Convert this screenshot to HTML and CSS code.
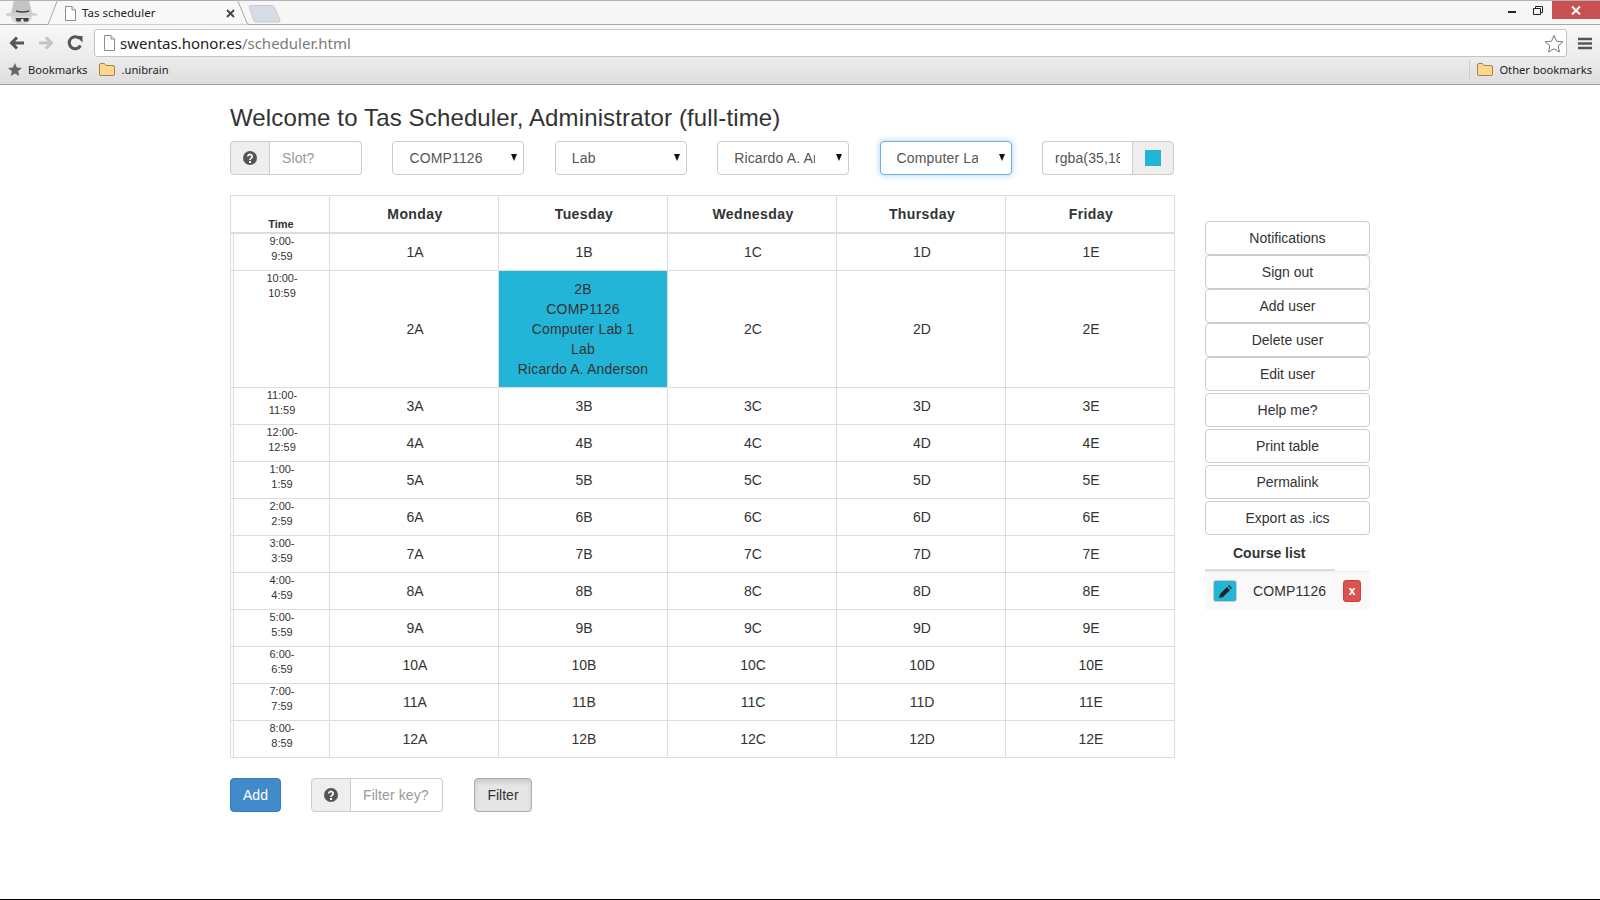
FILE: index.html
```html
<!DOCTYPE html>
<html lang="en">
<head>
    <meta charset="UTF-8">
    <meta name="viewport" content="width=device-width, initial-scale=1.0">
    <title>Tas scheduler</title>
    <link rel="stylesheet" href="styles.css">
</head>
<body>
    <header class="browser">
        <div class="tabstrip">
            <svg class="incognito" width="46" height="24" viewBox="0 0 46 24">
                <path d="M14 0h15l3 12H11z" fill="#c4c4c4"/>
                <ellipse cx="21.500" cy="13.500" rx="16" ry="2.500" fill="#d0d0d0"/>
                <path d="M11 15h21c0 5-4 8-10.500 8S11 20 11 15z" fill="#d8d8d8"/>
                <path d="M16 10q6 2 13 0" fill="none" stroke="#444" stroke-width="1.500"/>
                <path d="M15.500 17h6l-1 3.500h-4zM23 17h6l-1 3.500h-4z" fill="#444"/>
                <path d="M21 17.500h2" stroke="#444"/>
            </svg>
            <div class="tab">
                <svg class="tab-shape" width="204" height="25" viewBox="0 0 204 25">
                    <path d="M0 24.500h2L11 1.500Q11.500 .5 13 .5H190Q191.500 .5 192 1.500L201 23Q201.500 24.500 204 24.500" fill="#f8f8f8" stroke="#a8a8a8"/>
                </svg>
                <svg class="page-icon" width="13" height="15" viewBox="0 0 13 15">
                    <path d="M1.500 .5h6.500l3.500 3.500v10.500h-10z" fill="#fff" stroke="#8c8c8c"/>
                    <path d="M8 .5v3.500h3.500" fill="#eee" stroke="#8c8c8c"/>
                </svg>
                <span class="tab-title">Tas scheduler</span>
                <svg class="tab-close" width="9" height="9" viewBox="0 0 9 9">
                    <path d="M1 1l7 7M8 1 1 8" stroke="#444" stroke-width="1.800"/>
                </svg>
            </div>
            <svg class="new-tab" width="34" height="18" viewBox="0 0 34 18">
                <path d="M1 1.500Q1 .5 2.500 .5H24Q25.500 .5 26 1.500L32 15Q32.500 17 30 17H8Q6 17 5.500 15z" fill="#d7dce4" stroke="#c8ccd2"/>
            </svg>
            <div class="window-buttons">
                <svg width="8" height="3" viewBox="0 0 8 3"><rect width="8" height="2" y="1" fill="#222"/></svg>
                <svg width="10" height="9" viewBox="0 0 10 9">
                    <path d="M2.500 2V.5h7v6H8M.5 2.500h7v6h-7z" fill="none" stroke="#222"/>
                </svg>
                <div class="window-close">
                    <svg width="10" height="9" viewBox="0 0 10 9"><path d="M1 .5l8 8M9 .5l-8 8" stroke="#fff" stroke-width="2"/></svg>
                </div>
            </div>
        </div>
        <div class="toolbar">
            <svg class="nav-icon" width="16" height="14" viewBox="0 0 16 14">
                <path d="M15 7H3M8 1.500 2.500 7 8 12.500" fill="none" stroke="#555" stroke-width="3"/>
            </svg>
            <svg class="nav-icon" width="16" height="14" viewBox="0 0 16 14">
                <path d="M1 7h12M8 1.500 13.500 7 8 12.500" fill="none" stroke="#c4c4c4" stroke-width="3"/>
            </svg>
            <svg class="nav-icon" width="16" height="16" viewBox="0 0 16 16">
                <path d="M13.500 10.500A6 6 0 1 1 12.500 3.500" fill="none" stroke="#555" stroke-width="3"/>
                <path d="M9 .5h6.500V7z" fill="#555" transform="translate(0 .5)"/>
            </svg>
            <div class="address">
                <svg class="page-icon" width="13" height="16" viewBox="0 0 13 16">
                    <path d="M1.500 .5h6.500l3.500 3.500v11.500h-10z" fill="#fff" stroke="#8c8c8c"/>
                    <path d="M8 .5v3.500h3.500" fill="#eee" stroke="#8c8c8c"/>
                </svg>
                <span class="url">swentas.honor.es<span class="url-path">/scheduler.html</span></span>
                <svg class="star" width="20" height="19" viewBox="0 0 20 19">
                    <path d="M10 1.500 12.500 7.200l6.300.6-4.700 4.100 1.400 6.100L10 14.800 4.500 18l1.400-6.100L1.200 7.800l6.300-.6z" fill="#fff" stroke="#777"/>
                </svg>
            </div>
            <svg class="menu-icon" width="14" height="13" viewBox="0 0 14 13">
                <path d="M0 2h14M0 6.500h14M0 11h14" stroke="#555" stroke-width="2.500"/>
            </svg>
        </div>
        <div class="bookmarks">
            <svg width="14" height="13" viewBox="0 0 14 13">
                <path d="M7 0l1.900 4.600 5 .4-3.800 3.200 1.200 4.800L7 10.500 2.700 13l1.200-4.800L0 5l5-.4z" fill="#666"/>
            </svg>
            <span class="bookmark-label">Bookmarks</span>
            <svg class="folder" width="16" height="13" viewBox="0 0 16 13">
                <path d="M.5 2Q.5.500 2 .500h3.500l1.500 2h7q1.500 0 1.500 1.500v7q0 1.500-1.500 1.500H2Q.5 12.500.5 11z" fill="#fbd88e" stroke="#a5804a"/>
            </svg>
            <span class="bookmark-label">.unibrain</span>
            <div class="bookmarks-other">
                <svg class="folder" width="16" height="13" viewBox="0 0 16 13">
                    <path d="M.5 2Q.5.500 2 .500h3.500l1.500 2h7q1.500 0 1.500 1.500v7q0 1.500-1.500 1.500H2Q.5 12.500.5 11z" fill="#fbd88e" stroke="#a5804a"/>
                </svg>
                <span class="bookmark-label">Other bookmarks</span>
            </div>
        </div>
    </header>

    <div class="page">
        <main class="main">
            <h1 class="title">Welcome to Tas Scheduler, Administrator (full-time)</h1>

            <div class="controls">
                <div class="input-group">
                    <span class="addon">
                        <svg width="14" height="14" viewBox="0 0 14 14">
                            <circle cx="7" cy="7" r="7" fill="#555"/>
                            <path d="M4.800 5.400a2.200 2 0 1 1 3.400 1.700C7.400 7.600 7 8 7 9" fill="none" stroke="#fff" stroke-width="1.700"/>
                            <rect x="6" y="10" width="2" height="2" fill="#fff"/>
                        </svg>
                    </span>
                    <input class="field" type="text" placeholder="Slot?">
                </div>
                <div class="select-wrap">
                    <select class="picker"><option>COMP1126</option></select>
                </div>
                <div class="select-wrap">
                    <select class="picker"><option>Lab</option></select>
                </div>
                <div class="select-wrap">
                    <select class="picker"><option>Ricardo A. Anderson</option></select>
                </div>
                <div class="select-wrap">
                    <select class="picker picker-focus"><option>Computer Lab 1</option></select>
                </div>
                <div class="input-group">
                    <input class="field field-left" type="text" value="rgba(35,181,216,1)">
                    <span class="addon addon-right"><span class="swatch"></span></span>
                </div>
            </div>

            <table class="schedule">
                <colgroup>
                    <col class="col-time">
                    <col span="5">
                </colgroup>
                <thead>
                    <tr>
                        <th class="time-head">Time</th>
                        <th>Monday</th>
                        <th>Tuesday</th>
                        <th>Wednesday</th>
                        <th>Thursday</th>
                        <th>Friday</th>
                    </tr>
                </thead>
                <tbody>
                    <tr><td class="time">9:00-<br>9:59</td><td>1A</td><td>1B</td><td>1C</td><td>1D</td><td>1E</td></tr>
                    <tr>
                        <td class="time">10:00-<br>10:59</td>
                        <td>2A</td>
                        <td class="booked">2B<br>COMP1126<br>Computer Lab 1<br>Lab<br>Ricardo A. Anderson</td>
                        <td>2C</td><td>2D</td><td>2E</td>
                    </tr>
                    <tr><td class="time">11:00-<br>11:59</td><td>3A</td><td>3B</td><td>3C</td><td>3D</td><td>3E</td></tr>
                    <tr><td class="time">12:00-<br>12:59</td><td>4A</td><td>4B</td><td>4C</td><td>4D</td><td>4E</td></tr>
                    <tr><td class="time">1:00-<br>1:59</td><td>5A</td><td>5B</td><td>5C</td><td>5D</td><td>5E</td></tr>
                    <tr><td class="time">2:00-<br>2:59</td><td>6A</td><td>6B</td><td>6C</td><td>6D</td><td>6E</td></tr>
                    <tr><td class="time">3:00-<br>3:59</td><td>7A</td><td>7B</td><td>7C</td><td>7D</td><td>7E</td></tr>
                    <tr><td class="time">4:00-<br>4:59</td><td>8A</td><td>8B</td><td>8C</td><td>8D</td><td>8E</td></tr>
                    <tr><td class="time">5:00-<br>5:59</td><td>9A</td><td>9B</td><td>9C</td><td>9D</td><td>9E</td></tr>
                    <tr><td class="time">6:00-<br>6:59</td><td>10A</td><td>10B</td><td>10C</td><td>10D</td><td>10E</td></tr>
                    <tr><td class="time">7:00-<br>7:59</td><td>11A</td><td>11B</td><td>11C</td><td>11D</td><td>11E</td></tr>
                    <tr><td class="time">8:00-<br>8:59</td><td>12A</td><td>12B</td><td>12C</td><td>12D</td><td>12E</td></tr>
                </tbody>
            </table>

            <div class="actions">
                <button class="btn btn-primary">Add</button>
                <div class="input-group">
                    <span class="addon">
                        <svg width="14" height="14" viewBox="0 0 14 14">
                            <circle cx="7" cy="7" r="7" fill="#555"/>
                            <path d="M4.800 5.400a2.200 2 0 1 1 3.400 1.700C7.400 7.600 7 8 7 9" fill="none" stroke="#fff" stroke-width="1.700"/>
                            <rect x="6" y="10" width="2" height="2" fill="#fff"/>
                        </svg>
                    </span>
                    <input class="field" type="text" placeholder="Filter key?">
                </div>
                <button class="btn btn-active">Filter</button>
            </div>
        </main>

        <aside class="sidebar">
            <div class="btn-stack">
                <button class="btn">Notifications</button>
                <button class="btn">Sign out</button>
                <button class="btn">Add user</button>
                <button class="btn">Delete user</button>
                <button class="btn">Edit user</button>
            </div>
            <div class="btn-stack btn-stack-wide">
                <button class="btn">Help me?</button>
                <button class="btn">Print table</button>
                <button class="btn">Permalink</button>
                <button class="btn">Export as .ics</button>
            </div>
            <div class="course-title">Course list</div>
            <div class="course-row">
                <button class="mini-btn mini-edit">
                    <svg width="13" height="13" viewBox="0 0 13 13">
                        <path d="M0 13l1-4 7-7 3 3-7 7zM9 1l1-1 3 3-1 1z" fill="#222"/>
                    </svg>
                </button>
                <span class="course-name">COMP1126</span>
                <button class="mini-btn mini-delete">x</button>
            </div>
        </aside>
    </div>
    <div class="bottom-line"></div>
</body>
</html>
```

FILE: styles.css
```css
* {
    box-sizing: border-box;
}
html, body {
    margin: 0;
    height: 900px;
    overflow: hidden;
}
body {
    font-family: "Liberation Sans", Arial, sans-serif;
    font-size: 14px;
    line-height: 20px;
    color: #333;
    background-color: #fff;
    display: flex;
    flex-direction: column;
}

/* browser window */
.browser {
    height: 85px;
    font-family: "Noto Sans", "Open Sans", sans-serif;
    border-bottom: 1px solid #a2a2a2;
}
.tabstrip {
    height: 25px;
    display: flex;
    align-items: flex-start;
    background-color: #f6f6f6;
    border-top: 1px solid #b4b4b4;
    box-shadow: inset 0 -1px 0 #a8a8a8;
}
.incognito {
    flex: none;
}
.tab {
    position: relative;
    width: 204px;
    height: 24px;
    flex: none;
    display: flex;
    align-items: center;
    padding: 0 0 0 18px;
}
.tab-shape {
    position: absolute;
    left: 0;
    top: -1px;
}
.tab .page-icon,
.tab-title,
.tab-close {
    position: relative;
}
.tab-title {
    font-size: 11.500px;
    color: #222;
    margin-left: 5px;
    width: 144px;
}
.new-tab {
    flex: none;
    margin: 4px 0 0 -2px;
}
.window-buttons {
    margin-left: auto;
    display: flex;
    align-items: flex-start;
}
.window-buttons > svg:nth-child(1) {
    margin: 9px 17px 0 0;
}
.window-buttons > svg:nth-child(2) {
    margin: 5px 9px 0 0;
}
.window-close {
    width: 48px;
    height: 18px;
    background-color: #c75050;
    display: flex;
    align-items: center;
    justify-content: center;
}
.toolbar {
    height: 32px;
    display: flex;
    align-items: center;
    padding: 4px 8px 0 9px;
    background: linear-gradient(#f8f8f8, #ececec);
}
.nav-icon {
    flex: none;
    margin-right: 13px;
}
.address {
    flex: 1;
    height: 28px;
    margin-left: -2px;
    display: flex;
    align-items: center;
    padding: 0 2px 0 8px;
    background-color: #fff;
    border: 1px solid #c4c4c4;
    border-radius: 3px;
}
.url {
    font-size: 15px;
    color: #222;
    margin-left: 4px;
    padding-bottom: 1px;
    flex: 1;
}
.url-path {
    color: #7a7a7a;
}
.menu-icon {
    flex: none;
    margin-left: 11px;
}
.bookmarks {
    height: 27px;
    display: flex;
    align-items: center;
    padding: 0 8px 2px 8px;
    background: linear-gradient(#ececec, #dedede);
}
.bookmark-label {
    font-size: 11.200px;
    color: #222;
    margin-left: 6px;
}
.bookmarks .folder {
    margin-left: 12px;
}
.bookmarks-other {
    margin-left: auto;
    display: flex;
    align-items: center;
    border-left: 1px solid #c9ced6;
    height: 19px;
}
.bookmarks-other .folder {
    margin-left: 7px;
}

/* page */
.page {
    flex: 1;
    display: flex;
    padding-left: 230px;
}
.main {
    width: 945px;
}
.title {
    margin: 20px 0 0;
    font-size: 24px;
    font-weight: 400;
    line-height: 26px;
    letter-spacing: .14px;
}
.controls {
    margin-top: 10px;
    display: flex;
    gap: 30.400px;
}
.input-group {
    display: flex;
    width: 132px;
    height: 34px;
}
.addon {
    width: 40px;
    flex: none;
    display: flex;
    align-items: center;
    justify-content: center;
    background-color: #eee;
    border: 1px solid #ccc;
    border-radius: 4px 0 0 4px;
}
.addon-right {
    width: 42px;
    border-radius: 0 4px 4px 0;
}
.swatch {
    width: 16px;
    height: 16px;
    background-color: rgb(35, 181, 216);
}
.field {
    width: 100%;
    min-width: 0;
    padding: 6px 12px;
    font-family: inherit;
    font-size: 14px;
    letter-spacing: .1px;
    color: #555;
    background-color: #fff;
    border: 1px solid #ccc;
    border-left: 0;
    border-radius: 0 4px 4px 0;
    outline: none;
}
.field::placeholder {
    color: #999;
}
.field-left {
    border-left: 1px solid #ccc;
    border-right: 0;
    border-radius: 4px 0 0 4px;
}
.select-wrap {
    position: relative;
    width: 132px;
    height: 34px;
}
.select-wrap::after {
    content: "";
    position: absolute;
    right: 7px;
    top: 13px;
    border-left: 3.500px solid transparent;
    border-right: 3.500px solid transparent;
    border-top: 7px solid #111;
    pointer-events: none;
}
.picker {
    appearance: none;
    width: 100%;
    height: 34px;
    padding: 6px 33px 6px 16px;
    font-family: inherit;
    font-size: 14px;
    letter-spacing: .15px;
    color: #555;
    background-color: #fff;
    border: 1px solid #ccc;
    border-radius: 4px;
    outline: none;
}
.picker-focus {
    border-color: #66afe9;
    box-shadow: 0 0 6px rgba(102, 175, 233, .6);
}

/* schedule */
.schedule {
    width: 945px;
    margin-top: 20px;
    table-layout: fixed;
    border-collapse: collapse;
}
.col-time {
    width: 99px;
}
.schedule th,
.schedule td {
    border: 1px solid #ddd;
    padding: 8px 7px 8px 9px;
    text-align: center;
    vertical-align: middle;
}
.schedule th {
    height: 37px;
    font-weight: 700;
    letter-spacing: .4px;
    border-bottom-width: 2px;
}
.schedule .time-head {
    font-size: 11px;
    line-height: 15px;
    letter-spacing: 0;
    padding: 0 8px 0 10px;
    vertical-align: bottom;
}
.schedule .time {
    font-size: 11px;
    line-height: 15px;
    padding: 0 8px 0 12px;
    vertical-align: top;
    box-shadow: inset 2px 0 0 #fff, inset 3px 0 0 #ddd;
}
.schedule .booked {
    padding: 8px;
    letter-spacing: .15px;
    background-color: rgb(35, 181, 216);
}

/* bottom actions */
.actions {
    margin-top: 20px;
    display: flex;
    gap: 30px;
}
.btn {
    display: block;
    height: 34px;
    padding: 6px 12px;
    font-family: inherit;
    font-size: 14px;
    line-height: 20px;
    color: #333;
    background-color: #fff;
    border: 1px solid #ccc;
    border-radius: 4px;
}
.btn-primary {
    width: 51px;
    color: #fff;
    background-color: #428bca;
    border-color: #357ebd;
}
.btn-active {
    width: 58px;
    margin-left: 1px;
    background-color: #e6e6e6;
    border-color: #adadad;
    box-shadow: inset 0 3px 5px rgba(0, 0, 0, .125);
}

/* sidebar */
.sidebar {
    width: 165px;
    margin: 136px 0 0 30px;
}
.btn-stack {
    display: flex;
    flex-direction: column;
}
.btn-stack .btn {
    width: 100%;
}
.btn-stack-wide {
    gap: 2px;
    margin-top: 2px;
}
.course-title {
    height: 34px;
    margin-top: 2px;
    padding: 6px 0 0 28px;
    width: 130px;
    font-weight: 700;
    border-bottom: 2px solid #ddd;
}
.course-row {
    height: 39px;
    display: flex;
    align-items: center;
    padding: 0 9px 0 8px;
    background-color: #f9f9f9;
    border-top: 1px solid #eee;
}
.mini-btn {
    height: 22px;
    padding: 0;
    display: flex;
    align-items: center;
    justify-content: center;
    border-radius: 3px;
}
.mini-edit {
    width: 24px;
    background-color: rgb(35, 181, 216);
    border: 1px solid #ccc;
}
.mini-delete {
    width: 18px;
    font-family: inherit;
    font-size: 12px;
    font-weight: 700;
    color: #fff;
    background-color: #d9534f;
    border: 1px solid #d43f3a;
}
.course-name {
    flex: 1;
    padding-left: 16px;
    letter-spacing: .15px;
}
.bottom-line {
    height: 1px;
    background-color: #000;
}
```
